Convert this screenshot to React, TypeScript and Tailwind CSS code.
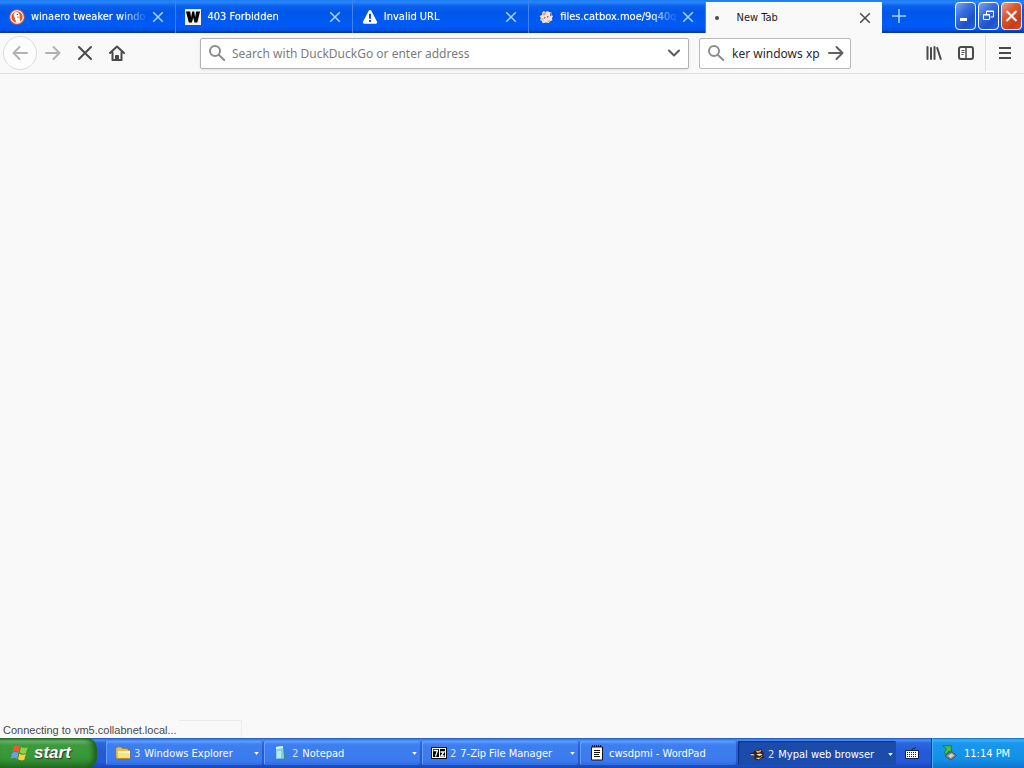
import React, { useState } from "react";

type Task = { label: string; count?: number; icon: React.ReactNode; menu: boolean; active?: boolean };
type Tab = { title: string; icon: React.ReactNode };

const DuckIcon = () => (
  <svg viewBox="0 0 16 16" className="size-4">
    <circle cx="8" cy="8" r="7.8" fill="#e2572f" />
    <circle cx="8" cy="8" r="6.2" fill="none" stroke="#fff" strokeWidth="1.1" />
    <path d="M5 4c1.300-1.600 4.200-1.400 5.200.6.6 1.300.5 2.500.3 3.600l.8 4.800a6 6 0 0 1-4 .7L5.600 8.500C4.800 6.800 4.500 5.300 5 4z" fill="#fff" />
    <path d="M7.800 7.800c1.500-.7 3-.6 3.800-.3-.6.9-2 1.500-3.600 1.400z" fill="#f9b62c" />
    <circle cx="8.300" cy="5.500" r=".7" fill="#2d4f8e" />
  </svg>
);

const WIcon = () => (
  <svg viewBox="0 0 16 16" className="size-4">
    <path d="M0 0h16v16H0z" fill="#f3f1e6" />
    <path d="M1 2.500h4.200l.9 6 1.100-6h2l1 6 .9-6H15l-2.700 11H9.500L8.200 8.500l-1.300 5H3.800z" fill="#000" />
  </svg>
);

const WarningIcon = () => (
  <svg viewBox="0 0 16 16" className="size-4">
    <path d="M6.700 1.700a1.500 1.500 0 0 1 2.600 0l5.600 10.800a1.400 1.400 0 0 1-1.200 2.200H2.300a1.400 1.400 0 0 1-1.200-2.200z" fill="#fff" />
    <path d="M7 4.700h2v5H7zM7 11h2v2H7z" fill="#164fbd" />
  </svg>
);

const CatboxIcon = () => (
  <svg viewBox="0 0 16 16" className="size-4">
    <path d="M4 4l1.500-2 2 1 2-1 1.500 1 2.500.5V6l1.500 1-1 2 .3 2.500-2 .5-1.500 2-3-.5-3 .8-1-2.300L2 11l1-2-1.500-2L4 6z" fill="#f3e2db" />
    <path d="M4 5l3-2 2 1-3 3zM3 10l2-1 1 3zM9 12l3-1-1 2.500z" fill="#dfa48f" />
    <path d="M6 8h1.500v1.500H6zM9 7h1.500v1.500H9zM12 4h1.500v3H12z" fill="#85708c" />
  </svg>
);

const CloseIcon = () => (
  <svg viewBox="0 0 12 12" className="size-3" fill="none" stroke="currentColor" strokeWidth="1.500">
    <path d="M1.200 1.200l9.600 9.600M10.800 1.200l-9.600 9.600" />
  </svg>
);

const SearchIcon = () => (
  <svg viewBox="0 0 18 18" className="size-[18px] shrink-0" fill="none" stroke="#8c8c8c" strokeWidth="2">
    <circle cx="7" cy="7" r="5" />
    <path d="M10.700 10.700l5.500 5.300" strokeLinecap="round" />
  </svg>
);

const Flag = () => (
  <svg viewBox="0 0 20 18" className="h-[18px] w-5">
    <path d="M4 2.500c2-1.500 4-1.500 6-.2L8.700 8c-2-1.300-4-1.300-6.200 0z" fill="#f0572b" />
    <path d="M11 3c2 1.200 4.200 1.300 6.600.2L16 9c-2.200 1-4.300.8-6.300-.4z" fill="#8fd045" />
    <path d="M2.200 9c2-1.300 4.200-1.300 6.200 0L7 14.800c-2-1.300-4-1.300-6.300 0z" fill="#6c9cf8" />
    <path d="M9.400 9.700c2 1.200 4.200 1.300 6.400.3l-1.500 5.700c-2.200 1-4.300.8-6.300-.4z" fill="#fdd038" />
  </svg>
);

const FolderIcon = () => (
  <svg viewBox="0 0 16 16" className="size-4">
    <path d="M.8 3.500L2 2h4l1.500 1.500H13V5h2v9H2.500L.8 12.500z" fill="#e9c04f" stroke="#8c6b1b" strokeWidth=".6" />
    <path d="M3 6h12v8H3z" fill="#fbe37c" />
    <path d="M3 6h12v2H3z" fill="#fff6c4" />
    <path d="M3 13h12v1H3z" fill="#b58a24" />
  </svg>
);

const NotepadIcon = () => (
  <svg viewBox="0 0 16 16" className="size-4">
    <path d="M3 2l7-1 4.500 12-2 2L3 14z" fill="#3f83bd" />
    <path d="M3 2l7-1 1 12.500L3 14z" fill="#86d0e4" />
    <path d="M3 2l7-1v2L3 4z" fill="#e2f7fb" />
    <path d="M4 6h4v7H4z" fill="#b4ebef" />
  </svg>
);

const SevenZipIcon = () => (
  <svg viewBox="0 0 16 12" className="h-3 w-4">
    <path d="M0 0h16v12H0z" fill="#000" />
    <path d="M1 1h14v10H1z" fill="#fff" />
    <path d="M2 2h6v8H2zM9 2h5v8H9z" fill="#000" />
    <path d="M2.500 3.500H6.500L4.500 9.500M9.500 5h3.500L10 9H13.500" fill="none" stroke="#fff" strokeWidth="1.300" />
  </svg>
);

const WordPadIcon = () => (
  <svg viewBox="0 0 14 16" className="h-4 w-3.5">
    <path d="M1.500 2h11v13h-11z" fill="#fff" stroke="#111" strokeWidth="1" />
    <path d="M2 0h1v2H2zM4 0h1v2H4zM6 0h1v2H6zM8 0h1v2H8zM10 0h1v2h-1z" fill="#111" />
    <path d="M4 5.500h6M4 7.500h6M4 9.500h5M4 11.500h6" stroke="#111" strokeWidth="1" />
  </svg>
);

const MypalIcon = () => (
  <svg viewBox="0 0 16 16" className="size-4">
    <path d="M0 7.500l4-1L6 4l3 0 4-1.500V5l2 2-.5 3 1 2-3.500.5-3 2-4-1.500.5-3-3 .5 1.500-1.500z" fill="#33261f" />
    <path d="M6.500 4.500l3 .5 3-1.500L11.500 6l-3 1z" fill="#f0aa5a" />
    <path d="M1 8h4l.5 1.500h-3z" fill="#cdb088" />
    <path d="M7 8.500l4-1 2.500 1-3 1.500zM6.500 12l3 1.200 3-1.700z" fill="#f5e6cf" />
    <path d="M12 9.500l2 .5-2 1.500z" fill="#c96a2e" />
  </svg>
);

const tabs: Tab[] = [
  { title: "winaero tweaker windo", icon: <DuckIcon /> },
  { title: "403 Forbidden", icon: <WIcon /> },
  { title: "Invalid URL", icon: <WarningIcon /> },
  { title: "files.catbox.moe/9q40q", icon: <CatboxIcon /> },
  { title: "New Tab", icon: <span className="size-1 rounded-full bg-[#4a4a4a]" /> },
];

const tasks: Task[] = [
  { label: "Windows Explorer", count: 3, icon: <FolderIcon />, menu: true },
  { label: "Notepad", count: 2, icon: <NotepadIcon />, menu: true },
  { label: "7-Zip File Manager", count: 2, icon: <SevenZipIcon />, menu: true },
  { label: "cwsdpmi - WordPad", icon: <WordPadIcon />, menu: false },
  { label: "Mypal web browser", count: 2, icon: <MypalIcon />, menu: true, active: true },
];

function TabStrip() {
  const active = tabs.length - 1;
  return (
    <header className="flex h-[33px] bg-[linear-gradient(#1a7cf5,#2a86fb_2px,#0b62ee_6px,#0057e8_12px,#005bf5_24px,#0055ea_30px,#0038a8_32px)]">
      <div className="grid min-w-0 flex-1 grid-cols-5">
        {tabs.map((tab, i) => (
          <div
            key={tab.title}
            className={
              i === active
                ? "mt-0.5 flex min-w-0 items-center bg-[#f9f9fa] pr-[11px] pl-[3px] text-[#1c1c1c]"
                : "flex min-w-0 items-center border-r border-[#3f85f2] pr-[11px] pl-[9px] text-white"
            }
          >
            <button className="flex min-w-0 flex-1 items-center gap-1.5 text-left">
              <span className="flex size-4 shrink-0 items-center justify-center">{tab.icon}</span>
              <span
                className={
                  i === active
                    ? "ml-1.5 flex-1 overflow-hidden pt-px text-[11px] whitespace-nowrap"
                    : "flex-1 overflow-hidden pt-0.5 text-[11px] whitespace-nowrap [mask-image:linear-gradient(to_left,transparent,black_28px)] [text-shadow:0_0_1px_#ffffff80]"
                }
              >
                {tab.title}
              </span>
            </button>
            <button aria-label="Close tab" className={i === active ? "ml-1.5 text-[#4a4a4a]" : "ml-1 text-[#a9d4ff]"}>
              <CloseIcon />
            </button>
          </div>
        ))}
      </div>
      <div className="flex w-[142px] shrink-0 items-start pr-0.5">
        <button aria-label="New tab" className="mt-2 ml-[9px] text-[#a9d4ff]">
          <svg viewBox="0 0 16 16" className="size-4" fill="none" stroke="currentColor" strokeWidth="1.500">
            <path d="M8 1v14M1 8h14" />
          </svg>
        </button>
        <div className="mt-0.5 ml-auto flex gap-0.5">
          <button aria-label="Minimize" className="h-7 w-[21px] rounded-[4px] border border-white bg-[linear-gradient(135deg,#7da4ee,#3a6fe0_35%,#1f50cc_70%,#2a62dc)]">
            <svg viewBox="0 0 19 26" className="h-full w-full"><path d="M4 15h7v3H4z" fill="#fff" /></svg>
          </button>
          <button aria-label="Restore" className="h-7 w-[21px] rounded-[4px] border border-white bg-[linear-gradient(135deg,#7da4ee,#3a6fe0_35%,#1f50cc_70%,#2a62dc)]">
            <svg viewBox="0 0 19 26" className="h-full w-full" fill="none" stroke="#fff"><path d="M7.500 11V8h7v6h-3M7 8.500h8M4.500 11.500h6v5h-6zM4 12h7" /></svg>
          </button>
          <button aria-label="Close" className="h-7 w-[21px] rounded-[4px] border border-white bg-[linear-gradient(135deg,#eda08a,#dd5a36_35%,#c93c14_75%,#d4502a)]">
            <svg viewBox="0 0 19 26" className="h-full w-full" fill="none" stroke="#fff" strokeWidth="2"><path d="M4.500 8l10 10M14.500 8l-10 10" /></svg>
          </button>
        </div>
      </div>
    </header>
  );
}

function Toolbar() {
  const [address, setAddress] = useState("");
  const [query, setQuery] = useState("ker windows xp");
  return (
    <nav className="flex h-[41px] items-center border-b border-[#e0e0e1] bg-[#f9f9fa] pr-0.5 pl-[3px] font-[Noto_Sans,sans-serif] text-[#4a4a4a]">
      <button aria-label="Back" className="flex size-[34px] items-center justify-center rounded-full border border-[#dcdcdd] bg-[#fdfdfd] text-[#b2b2b2]">
        <svg viewBox="0 0 16 16" className="size-4" fill="none" stroke="currentColor" strokeWidth="2" strokeLinecap="round" strokeLinejoin="round"><path d="M15 8H1.500M7.500 2l-6 6 6 6" /></svg>
      </button>
      <button aria-label="Forward" className="flex w-8 justify-center text-[#b2b2b2]">
        <svg viewBox="0 0 16 16" className="size-4" fill="none" stroke="currentColor" strokeWidth="2" strokeLinecap="round" strokeLinejoin="round"><path d="M1 8h13.500M8.500 2l6 6-6 6" /></svg>
      </button>
      <button aria-label="Stop" className="flex w-8 justify-center">
        <svg viewBox="0 0 16 16" className="size-4" fill="none" stroke="currentColor" strokeWidth="2" strokeLinecap="round"><path d="M2 2l12 12M14 2L2 14" /></svg>
      </button>
      <button aria-label="Home" className="flex w-8 justify-center">
        <svg viewBox="0 0 16 16" className="size-4" fill="none" stroke="currentColor" strokeWidth="2" strokeLinejoin="round" strokeLinecap="round"><path d="M1 8l7-6.500L15 8M3.500 7.500V15h9V7.500" /><path d="M6.500 15v-4.500h3V15z" fill="currentColor" strokeWidth="1" /></svg>
      </button>
      <div className="ml-[67px] flex h-[31px] min-w-0 flex-1 items-center rounded-[2px] border border-[#b1b1b2] bg-white pr-1.5 pl-[7px] shadow-[0_1px_3px_#0000001a]">
        <SearchIcon />
        <input
          aria-label="Address"
          value={address}
          onChange={(e) => setAddress(e.target.value)}
          placeholder="Search with DuckDuckGo or enter address"
          className="ml-1.5 min-w-0 flex-1 bg-transparent pt-px text-[12px] outline-none placeholder:text-[#7c7c7c]"
        />
        <button aria-label="Show history" className="text-[#5a5a5a]">
          <svg viewBox="0 0 16 16" className="size-4" fill="none" stroke="currentColor" strokeWidth="2" strokeLinecap="round" strokeLinejoin="round"><path d="M3 5.500l5 5 5-5" /></svg>
        </button>
      </div>
      <div className="ml-2.5 flex h-[31px] w-[152px] items-center rounded-[2px] border border-[#b9b9ba] bg-white pr-1.5 pl-[7px]">
        <SearchIcon />
        <input
          aria-label="Search"
          value={query}
          onChange={(e) => setQuery(e.target.value)}
          className="ml-[7px] min-w-0 flex-1 bg-transparent pt-px text-[12px] text-[#2a2a2a] outline-none"
        />
        <button aria-label="Search" className="text-[#5f5f5f]">
          <svg viewBox="0 0 16 16" className="size-4" fill="none" stroke="currentColor" strokeWidth="2" strokeLinecap="round" strokeLinejoin="round"><path d="M1 8h13.500M8.500 2l6 6-6 6" /></svg>
        </button>
      </div>
      <div className="ml-[67px] flex items-center">
        <button aria-label="Library" className="flex w-8 justify-center">
          <svg viewBox="0 0 16 16" className="size-4" fill="none" stroke="currentColor" strokeLinecap="round" strokeWidth="2"><path d="M1.500 2v12M5 3v11M8.500 2v12M11.200 3l3.600 11" /></svg>
        </button>
        <button aria-label="Sidebars" className="flex w-8 justify-center">
          <svg viewBox="0 0 16 16" className="size-4" fill="none" stroke="currentColor"><rect x="1" y="2" width="14" height="12" rx="2" strokeWidth="2" /><path d="M8 2v12" strokeWidth="1.500" /><path d="M3.500 5.500h3M3.500 7.500h3M3.500 9.500h2" /></svg>
        </button>
        <span className="ml-[3px] h-9 w-px bg-[#e0e0e1]" />
        <button aria-label="Menu" className="flex w-9 justify-center pl-0.5">
          <svg viewBox="0 0 16 16" className="size-4" fill="none" stroke="currentColor" strokeWidth="2"><path d="M2 3h12M2 8h12M2 13h12" /></svg>
        </button>
      </div>
    </nav>
  );
}

function Taskbar() {
  return (
    <footer className="flex h-[30px] bg-[linear-gradient(#1f4fb8,#4a90f5_2px,#2a66e0_5px,#2459d8_14px,#2459d8_24px,#1a45b0)] text-[11px] text-white">
      <button className="flex w-[97px] items-center gap-1 rounded-r-[10px] bg-[linear-gradient(#2c6e2c,#6bb56b_3px,#3d9b3d_7px,#379637_20px,#246f24)] pl-2.5 font-[Liberation_Sans] text-[17px] font-bold italic shadow-[inset_-4px_0_5px_#1d601d] [text-shadow:1px_1px_1px_#333]">
        <Flag />
        start
      </button>
      <div className="ml-[9px] flex min-w-0 flex-1 gap-0.5 pt-[3px] pb-[3px]">
        {tasks.map((t) => (
          <button
            key={t.label}
            className={
              t.active
                ? "grid min-w-0 flex-1 rounded-[2px] bg-[#1c4cab] pt-0.5 pr-[3px] pl-[11px] shadow-[inset_1px_1px_1px_#123078]"
                : "grid min-w-0 flex-1 rounded-[2px] bg-[linear-gradient(#5c98f8,#3d7ef0_4px,#3a7aee_20px,#2f6ade)] pr-[3px] pl-[9px] shadow-[inset_1px_1px_0_#68a0fa]"
            }
          >
            <span className="flex min-w-0 items-center">
              <span className="flex w-4 shrink-0 justify-center">{t.icon}</span>
              {t.count && <span className="ml-[3px] pt-0.5 text-[#e6ded8]">{t.count}</span>}
              <span className="ml-1 min-w-0 flex-1 overflow-hidden pt-0.5 text-left whitespace-nowrap">{t.label}</span>
              {t.menu && (
                <svg viewBox="0 0 6 4" className="h-[3px] w-[5px]"><path d="M0 0h6L3 4z" fill="#fff" /></svg>
              )}
            </span>
          </button>
        ))}
      </div>
      <button aria-label="Keyboard layout" className="flex w-[35px] items-center justify-center pr-1">
        <svg viewBox="0 0 14 14" className="size-3.5">
          <path d="M7 4c0-2 3-1 4-3" fill="none" stroke="#0b1f55" strokeWidth="1" />
          <path d="M.5 4.500h13v8H.5z" fill="#fff" stroke="#0b1f55" strokeWidth="1" />
          <path d="M2 6.500h10M2 8.500h10M2 10.500h10" stroke="#0b1f55" strokeWidth="1" strokeDasharray="1 1" />
        </svg>
      </button>
      <div className="flex w-[93px] items-center border-l border-[#0b3c96] bg-[linear-gradient(#1668c4,#3ab4f8_2px,#1a96ee_5px,#1290e8_22px,#1172cc)] pl-2.5 shadow-[inset_1px_0_0_#3cb4f5]">
        <svg viewBox="0 0 16 16" className="size-4">
          <path d="M3 11l6-5 5.500 4.500L9 15z" fill="#85898a" stroke="#3c4448" strokeWidth=".8" />
          <path d="M6 11l3.500-2.500 2.500 2L9 13z" fill="#d2d4d0" />
          <path d="M.8.8h8.400v7L7 6 4 9.500 2.500 7.500 4.500 4z" fill="#45c345" stroke="#187018" strokeWidth=".7" />
        </svg>
        <time className="ml-1.5 pt-0.5 whitespace-nowrap">11:14 PM</time>
      </div>
    </footer>
  );
}

export default function App() {
  return (
    <div className="flex min-h-screen flex-col bg-[#f9f9fa] font-[DejaVu_Sans_Condensed,Noto_Sans,sans-serif]">
      <TabStrip />
      <Toolbar />
      <main className="flex flex-1 flex-col justify-end">
        <div className="flex h-[18px] w-[242px] items-center text-[11px] text-[#4a4a4a]">
          <span className="pt-0.5 pr-0.5 pl-[3px] font-[Liberation_Sans] whitespace-nowrap">Connecting to vm5.collabnet.local...</span>
          <span className="h-full flex-1 border-t border-r border-[#ececed]" />
        </div>
      </main>
      <Taskbar />
    </div>
  );
}
